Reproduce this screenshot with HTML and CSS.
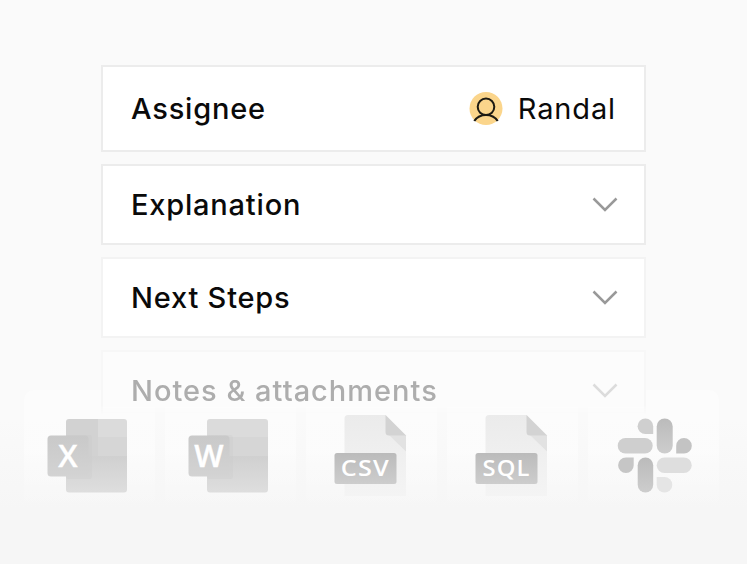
FILE: index.html
```
<!DOCTYPE html>
<html lang="en">
<head>
    <meta charset="UTF-8">
    <meta name="viewport" content="width=device-width, initial-scale=1">
    <title>Assignee</title>
    <link rel="stylesheet" href="styles.css">
</head>
<body>
<div class="panel">
    <div class="row row-assignee">
        <span class="row-title">Assignee</span>
        <div class="user">
            <svg class="avatar" viewBox="0 0 34 34" aria-hidden="true">
                <circle cx="17" cy="16.500" r="16.500" fill="#fbd58b"/>
                <circle cx="17" cy="14.800" r="8.300" fill="none" stroke="#1d1a12" stroke-width="2"/>
                <path d="M5.300 29C8 25 12.200 23 17 23s9 2 11.700 6" fill="none" stroke="#1d1a12" stroke-width="2.200"/>
            </svg>
            <span class="user-name">Randal</span>
        </div>
    </div>
    <div class="row">
        <span class="row-title">Explanation</span>
        <svg class="chevron" viewBox="0 0 26 16" aria-hidden="true"><path d="M1.500 1.500L13 13L24.500 1.500"/></svg>
    </div>
    <div class="row row-light">
        <span class="row-title">Next Steps</span>
        <svg class="chevron" viewBox="0 0 26 16" aria-hidden="true"><path d="M1.500 1.500L13 13L24.500 1.500"/></svg>
    </div>
    <div class="row row-faded">
        <span class="row-title">Notes &amp; attachments</span>
        <svg class="chevron" viewBox="0 0 26 16" aria-hidden="true"><path d="M1.500 1.500L13 13L24.500 1.500"/></svg>
    </div>
</div>
<div class="files">
    <div class="file">
        <svg class="file-icon" viewBox="0 0 131 120">
            <defs>
                <linearGradient id="badge" x1="0" y1="0" x2="0" y2="1">
                    <stop offset="0" stop-color="#c9c9c9"/>
                    <stop offset="1" stop-color="#d3d3d3"/>
                </linearGradient>
                <linearGradient id="label" x1="0" y1="0" x2="0" y2="1">
                    <stop offset="0" stop-color="#bbb"/>
                    <stop offset="1" stop-color="#cdcdcd"/>
                </linearGradient>
                <linearGradient id="page" x1="0" y1="0" x2="0" y2="1">
                    <stop offset="0" stop-color="#ebebeb"/>
                    <stop offset="1" stop-color="#f4f4f4"/>
                </linearGradient>
                <linearGradient id="low" x1="0" y1="0" x2="0" y2="1">
                    <stop offset="0" stop-color="#d0d0d0"/>
                    <stop offset="1" stop-color="#dedede"/>
                </linearGradient>
                <clipPath id="book"><rect x="42" y="29" width="61" height="73.500" rx="3"/></clipPath>
            </defs>
            <g clip-path="url(#book)">
                <rect x="42" y="28" width="32" height="38" fill="#d2d2d2"/>
                <rect x="74" y="28" width="29" height="19" fill="#dbdbdb"/>
                <rect x="74" y="47" width="29" height="19" fill="#d6d6d6"/>
                <rect x="42" y="66" width="61" height="37" fill="url(#low)"/>
            </g>
            <rect x="42" y="45" width="26" height="44" rx="3" fill="#c9c9c9" opacity=".3"/>
            <rect x="23.500" y="45.500" width="41" height="41" rx="3.500" fill="url(#badge)"/>
            <text class="letter" x="44" y="77">X</text>
        </svg>
    </div>
    <div class="file">
        <svg class="file-icon" viewBox="0 0 131 120">
            <g clip-path="url(#book)">
                <rect x="42" y="28" width="61" height="19" fill="#dbdbdb"/>
                <rect x="42" y="47" width="61" height="19" fill="#d6d6d6"/>
                <rect x="42" y="66" width="61" height="37" fill="url(#low)"/>
            </g>
            <rect x="42" y="45" width="26" height="44" rx="3" fill="#c9c9c9" opacity=".3"/>
            <rect x="23.500" y="45.500" width="41" height="41" rx="3.500" fill="url(#badge)"/>
            <text class="letter" x="44" y="77">W</text>
        </svg>
    </div>
    <div class="file">
        <svg class="file-icon" viewBox="0 0 131 120">
            <path d="M42 25H79.500L100 45.500V106H38.500V28.500a3.500 3.500 0 0 1 3.500-3.500z" fill="url(#page)"/>
            <path d="M83 45H100V61.500z" fill="#e2e2e2"/>
            <path d="M79.500 25L100 45.500H83a3.500 3.500 0 0 1-3.500-3.500z" fill="#d3d3d3"/>
            <rect x="28.500" y="63" width="62" height="31" rx="2.500" fill="url(#label)"/>
            <text class="ext" x="34.800" y="86" textLength="49" lengthAdjust="spacingAndGlyphs">CSV</text>
        </svg>
    </div>
    <div class="file">
        <svg class="file-icon" viewBox="0 0 131 120">
            <path d="M42 25H79.500L100 45.500V106H38.500V28.500a3.500 3.500 0 0 1 3.500-3.500z" fill="url(#page)"/>
            <path d="M83 45H100V61.500z" fill="#e2e2e2"/>
            <path d="M79.500 25L100 45.500H83a3.500 3.500 0 0 1-3.500-3.500z" fill="#d3d3d3"/>
            <rect x="28.500" y="63" width="62" height="31" rx="2.500" fill="url(#label)"/>
            <text class="ext" x="35.500" y="86" textLength="48" lengthAdjust="spacingAndGlyphs">SQL</text>
        </svg>
    </div>
    <div class="file">
        <svg class="file-icon" viewBox="-0.700 0 131 120">
            <path d="M64.500 44H56.700A7.800 7.800 0 1 1 64.500 36.200z" fill="#cfcfcf"/>
            <rect x="68" y="28.500" width="16" height="35" rx="8" fill="url(#label)"/>
            <rect x="29" y="48" width="35" height="15.500" rx="7.750" fill="#cfcfcf"/>
            <path d="M87.500 63.500V55.800a7.800 7.800 0 1 1 7.800 7.700z" fill="#c3c3c3"/>
            <path d="M45 67.500V75.200a7.800 7.800 0 1 1-7.800-7.700z" fill="#c6c6c6"/>
            <rect x="49" y="67.500" width="15.500" height="35" rx="7.750" fill="url(#label)"/>
            <rect x="68" y="67.500" width="35" height="15.500" rx="7.750" fill="#dedede"/>
            <path d="M68 87H75.800A7.800 7.800 0 1 1 68 94.800z" fill="#e5e5e5"/>
        </svg>
    </div>
</div>
</body>
</html>
```
FILE: styles.css
```
*{
    box-sizing: border-box;
}
body{
    margin: 0;
    width: 747px;
    height: 564px;
    overflow: hidden;
    background: linear-gradient(#fafafa 0, #fafafa 420px, #f6f6f6 510px, #f6f6f6 100%);
    font-family: Inter, "Liberation Sans", sans-serif;
    color: #0a0a0a;
}
.panel{
    display: flex;
    flex-direction: column;
    gap: 12px;
    width: 545px;
    margin-left: 101px;
    padding-top: 65px;
}
.row{
    display: flex;
    align-items: center;
    justify-content: space-between;
    height: 81px;
    padding: 0 26px 0 28px;
    border: 2px solid #ececec;
    background: #fff;
    font-size: 29px;
}
.row-assignee{
    height: 87px;
    padding-right: 28px;
}
.row-light{
    border-color: #f3f3f3;
}
.row-faded{
    border-color: #f7f7f7;
    background: #fcfcfc;
    color: #adadad;
    -webkit-mask-image: linear-gradient(#000 68%, transparent 80%);
    mask-image: linear-gradient(#000 68%, transparent 80%);
}
.row-title{
    font-weight: 500;
    letter-spacing: 0.8px;
}
.row-faded .row-title{
    letter-spacing: 1px;
}
.user{
    display: flex;
    align-items: center;
    gap: 15px;
}
.user-name{
    letter-spacing: 0.87px;
}
.avatar{
    width: 34px;
    height: 34px;
}
.chevron{
    width: 26px;
    height: 16px;
    fill: none;
    stroke: #999;
    stroke-width: 2.5;
}
.row-faded .chevron{
    stroke: #dcdcdc;
}

/* file type tiles, they overlap the last row */
.files{
    display: flex;
    gap: 10px;
    margin: -41px 0 0 24px;
}
.file{
    width: 131px;
    height: 120px;
    flex: none;
    border-radius: 10px;
    background: linear-gradient(rgba(255,255,255,.45), rgba(255,255,255,.45) 50%, rgba(255,255,255,0));
}
.file-icon{
    display: block;
    width: 131px;
    height: 120px;
}
.letter{
    font-family: "Open Sans", sans-serif;
    font-size: 31px;
    font-weight: 600;
    stroke: #fff;
    stroke-width: 0.4;
    fill: #fff;
    text-anchor: middle;
}
.ext{
    font-family: "Open Sans", sans-serif;
    font-size: 21.5px;
    font-weight: 600;
    letter-spacing: 1px;
    fill: #fff;
}
```
